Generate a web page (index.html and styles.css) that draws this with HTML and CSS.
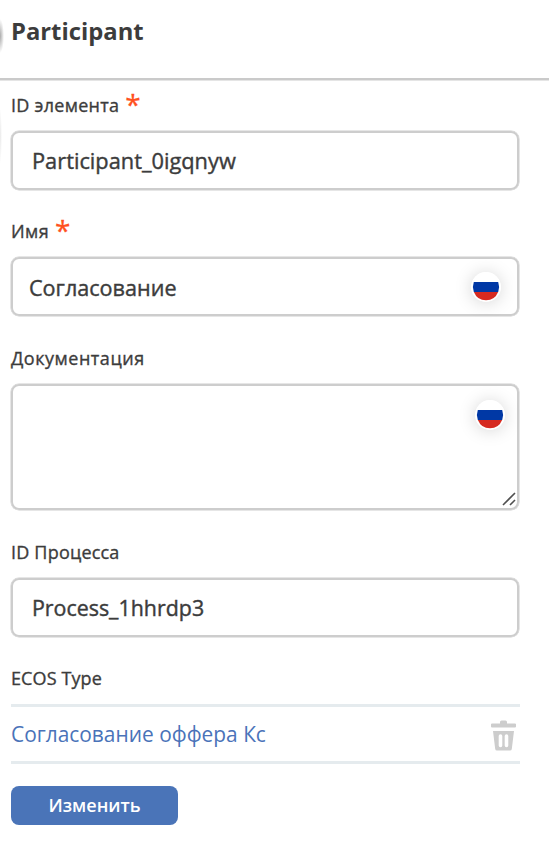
FILE: index.html
```html
<!DOCTYPE html>
<html lang="ru">
<head>
<meta charset="utf-8">
<title>Participant</title>
<link rel="stylesheet" href="styles.css">
</head>
<body>
<div class="panel">
  <header class="header"><h1 class="title">Participant</h1></header>
  <main class="form">
    <section class="field">
      <div class="label"><span class="label-id">ID элемента</span><span class="star">*</span></div>
      <div class="input"><span class="value-participant">Participant_0igqnyw</span></div>
    </section>
    <section class="field name-field">
      <div class="label"><span class="label-name">Имя</span><span class="star">*</span></div>
      <div class="input input-flag"><span class="value-name">Согласование</span>
        <svg class="flag" viewBox="0 0 30 30"><circle cx="15" cy="15" r="15" fill="#fff"/><path d="M2.8 10H27.2Q29 15 27.2 20H2.8Q1 15 2.8 10Z" fill="#0038a5"/><path d="M2.9 20H27.1A13 13 0 0 1 2.9 20Z" fill="#d62a20"/></svg>
      </div>
    </section>
    <section class="field doc-field">
      <div class="label"><span class="label-doc">Документация</span></div>
      <div class="input area">
        <svg class="flag" viewBox="0 0 30 30"><circle cx="15" cy="15" r="15" fill="#fff"/><path d="M2.8 10H27.2Q29 15 27.2 20H2.8Q1 15 2.8 10Z" fill="#0038a5"/><path d="M2.9 20H27.1A13 13 0 0 1 2.9 20Z" fill="#d62a20"/></svg>
        <svg class="grip" viewBox="0 0 14 14"><path d="M1 13L13 1M8 13L13 8" stroke="#505050" stroke-width="1.6" fill="none"/></svg>
      </div>
    </section>
    <section class="field">
      <div class="label"><span class="label-process">ID Процесса</span></div>
      <div class="input"><span class="value-process">Process_1hhrdp3</span></div>
    </section>
    <section class="field type-field">
      <div class="label"><span class="label-type">ECOS Type</span></div>
      <div class="type-row"><span class="type-link">Согласование оффера Кс</span>
        <svg class="trash" viewBox="0 0 25 31"><path d="M1 3.5H9V2Q9 .5 10.5 .5H14.5Q16 .5 16 2V3.5H24Q25 3.500 25 4.500V6.500Q25 7.500 24 7.500H1Q0 7.500 0 6.500V4.500Q0 3.500 1 3.500Z" fill="#cdcdcd"/><path fill-rule="evenodd" d="M2 11H23L20.800 29Q20.600 30.500 19 30.500H6Q4.400 30.500 4.200 29ZM9.500 14.200Q7.700 14.200 7.700 16V25.500Q7.700 27.300 9.500 27.300T11.300 25.500V16Q11.300 14.200 9.500 14.200ZM15.500 14.200Q13.700 14.200 13.700 16V25.500Q13.700 27.300 15.500 27.300T17.300 25.500V16Q17.300 14.200 15.500 14.200Z" fill="#cdcdcd"/></svg>
      </div>
    </section>
    <button class="button" type="button">Изменить</button>
  </main>
</div>
</body>
</html>
```
FILE: styles.css
```css
* { box-sizing: border-box; }
body { margin: 0; background: #fff; color: #3c3c3c; font-family: "Open Sans", "Noto Sans", sans-serif; }
.panel {
  height: 845px;
  overflow: hidden;
  background:
    radial-gradient(ellipse 4px 17px at 0 36px, #aaa, transparent),
    radial-gradient(ellipse 2px 28px at 0 136px, #e8e8e8, transparent),
    #fff;
}
.header { height: 80px; padding: 13px 11px 0; border-bottom: 2px solid #cacaca; box-shadow: 0 .5px 0 #cacaca; }
.title { margin: 0; font-size: 23.8px; line-height: 37px; font-weight: 700; white-space: nowrap; }
.form { padding: 0 30px 0 11px; }
.field { padding-top: 12px; margin-bottom: 16px; }
.label { display: flex; height: 39px; line-height: 26px; font-size: 18px; white-space: nowrap; -webkit-text-stroke: .35px #3c3c3c; }
.label-id { letter-spacing: .27px; }
.label-name { letter-spacing: .4px; }
.label-doc { letter-spacing: .53px; }
.label-process { letter-spacing: .2px; }
.label-type { letter-spacing: .1px; }
.star { margin-left: 6px; color: #ff5020; font-size: 28px; line-height: 25px; -webkit-text-stroke: .3px #ff5020; }
.input {
  display: flex;
  align-items: center;
  height: 59px;
  border: 2px solid #cdcdcd;
  border-radius: 8px;
  box-shadow: 0 0 0 .5px #cdcdcd;
  padding: 0 18px 0 19px;
  font-size: 21.8px;
  white-space: nowrap;
  -webkit-text-stroke: .4px #3c3c3c;
}
.input-flag { justify-content: space-between; padding: 1px 16px 0 16px; }
.value-name { font-size: 21.6px; }
.value-process { font-size: 21.4px; }
.flag { width: 30px; height: 30px; flex: none; border-radius: 50%; box-shadow: 0 1px 17px rgba(0, 0, 0, .17); }
.area { position: relative; height: 126px; align-items: flex-start; justify-content: flex-end; padding: 14px 12px 0; }
.grip { position: absolute; right: 1px; bottom: 2px; width: 14px; height: 14px; }
.name-field, .doc-field { margin-bottom: 17px; }
.type-field { margin-bottom: 22px; }
.type-row { display: flex; justify-content: space-between; align-items: center; height: 60px; padding: 0 4px 0 0; margin-right: -1px; border: solid #e5ebee; border-width: 3px 0; }
.type-link { color: #4a73b9; font-size: 20.9px; font-weight: 400; white-space: nowrap; }
.trash { width: 25px; height: 31px; margin-top: 2px; }
.button { display: block; width: 167px; height: 39px; border: 0; border-radius: 8px; padding: 0; background: #4a74b8; color: #fff; font: 600 18px/39px "Open Sans", "Noto Sans", sans-serif; }
```
